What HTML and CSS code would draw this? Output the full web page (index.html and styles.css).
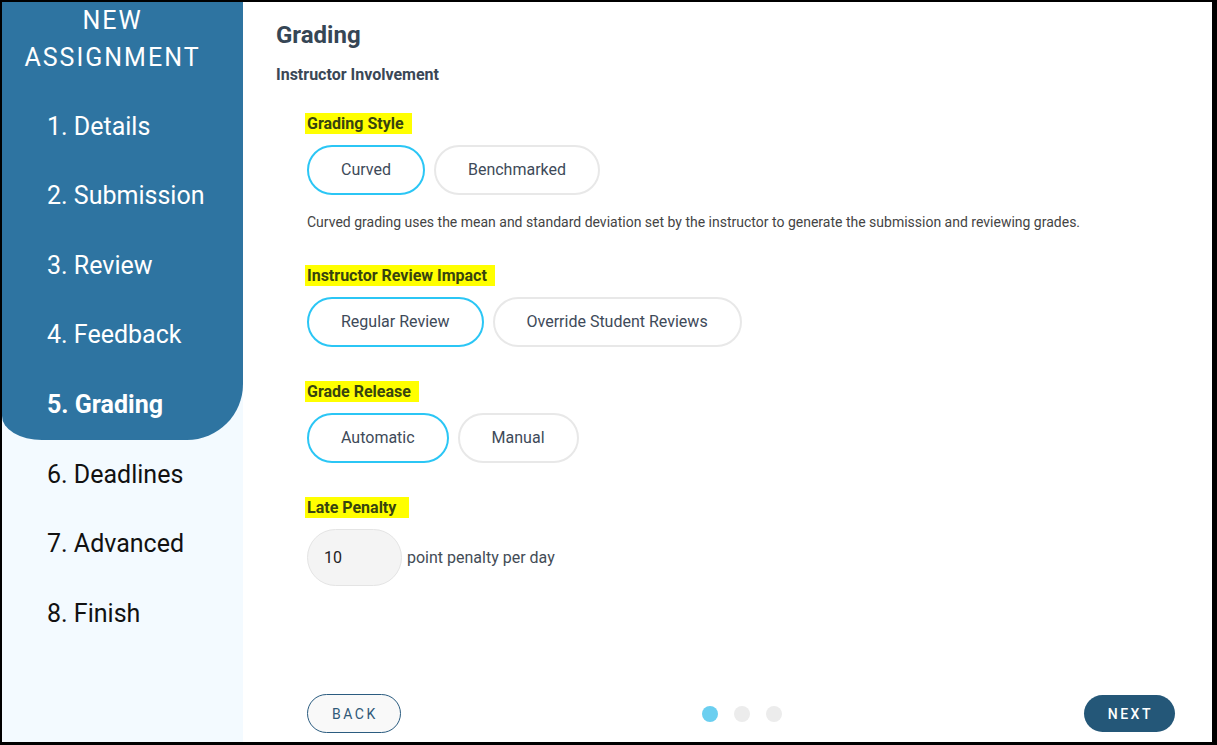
FILE: index.html
```html
<!DOCTYPE html>
<html lang="en">
<head>
  <meta charset="UTF-8">
  <title>New Assignment - Grading</title>
  <link rel="stylesheet" href="styles.css">
</head>
<body>
  <div class="frame">
    <aside class="sidebar">
      <div class="sidebar-top">
        <div class="sidebar-title">NEW<br>ASSIGNMENT</div>
        <ul class="steps">
          <li>1. Details</li>
          <li>2. Submission</li>
          <li>3. Review</li>
          <li>4. Feedback</li>
          <li class="current">5. Grading</li>
        </ul>
      </div>
      <ul class="steps steps-next">
        <li>6. Deadlines</li>
        <li>7. Advanced</li>
        <li>8. Finish</li>
      </ul>
    </aside>

    <main class="content">
      <h1>Grading</h1>
      <h2>Instructor Involvement</h2>

      <div class="fields">
        <div class="field">
          <div class="field-label"><span>Grading Style</span></div>
          <div class="options">
            <button class="option active">Curved</button>
            <button class="option">Benchmarked</button>
          </div>
          <p class="hint">Curved grading uses the mean and standard deviation set by the instructor to generate the submission and reviewing grades.</p>
        </div>

        <div class="field">
          <div class="field-label"><span>Instructor Review Impact</span></div>
          <div class="options">
            <button class="option active">Regular Review</button>
            <button class="option">Override Student Reviews</button>
          </div>
        </div>

        <div class="field">
          <div class="field-label"><span>Grade Release</span></div>
          <div class="options">
            <button class="option active">Automatic</button>
            <button class="option">Manual</button>
          </div>
        </div>

        <div class="field">
          <div class="field-label"><span class="wide">Late Penalty</span></div>
          <div class="penalty">
            <input class="penalty-input" type="text" value="10">
            <span>point penalty per day</span>
          </div>
        </div>
      </div>

      <div class="pager">
        <button class="btn-back">BACK</button>
        <div class="dots">
          <span class="dot active"></span>
          <span class="dot"></span>
          <span class="dot"></span>
        </div>
        <button class="btn-next">NEXT</button>
      </div>
    </main>
  </div>
</body>
</html>
```

FILE: styles.css
```css
body {
  margin: 0;
  font-family: Roboto, "Liberation Sans", sans-serif;
  background: white;
}

.frame {
  width: 1217px;
  height: 745px;
  box-sizing: border-box;
  border: 2px solid black;
  border-right-width: 5px;
  border-bottom-width: 3px;
  display: flex;
}

/* sidebar */
.sidebar {
  width: 241px;
  flex-shrink: 0;
  background: #f3faff;
}

.sidebar-top {
  background: #2e74a1;
  padding-bottom: 1px;
  border-radius: 0 0 56px 40px / 0 0 56px 24px;
}

.sidebar-title {
  color: white;
  font-size: 25px;
  line-height: 37px;
  letter-spacing: 2px;
  text-align: center;
  padding-right: 20px;
  margin-bottom: 16px;
}

.steps {
  list-style: none;
  margin: 0;
  padding: 0 0 0 45px;
}

.steps li {
  font-size: 25px;
  line-height: 69.4px;
  color: white;
}

.steps li.current {
  font-weight: bold;
}

.steps-next li {
  color: #111;
}

/* main */
.content {
  flex: 1;
  display: flex;
  flex-direction: column;
  padding: 19px 37px 9px 33px;
}

.content h1 {
  margin: 0;
  font-size: 24px;
  line-height: 28px;
  font-weight: bold;
  color: #364655;
}

.content h2 {
  margin: 17px 0 0;
  font-size: 16px;
  line-height: 18px;
  font-weight: bold;
  color: #3a4756;
}

.fields {
  margin-top: 29.5px;
  padding-left: 31px;
}

.field {
  margin-bottom: 35px;
}

.field-label {
  font-size: 16px;
  font-weight: bold;
  color: #38440f;
}

.field-label span {
  background: #ffff00;
  padding: 1px 8px 1px 2px;
  margin-left: -2px;
}

.field-label span.wide {
  padding-right: 13px;
}

.options {
  display: flex;
  gap: 9px;
  margin-top: 12px;
}

.option {
  height: 50px;
  padding: 0 32px;
  border: 2px solid #e8e8e8;
  border-radius: 25px;
  background: white;
  font-family: Roboto, sans-serif;
  font-size: 16px;
  color: #3e4a59;
  cursor: pointer;
}

.option.active {
  border-color: #2bc6f5;
}

.hint {
  margin: 19px 0 1px;
  font-size: 14px;
  line-height: 17px;
  color: #444;
}

.penalty {
  display: flex;
  align-items: center;
  gap: 5px;
  margin-top: 12px;
  font-size: 16px;
  color: #434c56;
}

.penalty-input {
  width: 95px;
  height: 57px;
  box-sizing: border-box;
  padding: 0 16px;
  border: 1px solid #e4e4e4;
  border-radius: 29px;
  background: #f4f4f4;
  font-family: Roboto, sans-serif;
  font-size: 16px;
  color: #222;
}

/* bottom nav */
.pager {
  margin-top: auto;
  padding-left: 31px;
  display: flex;
  justify-content: space-between;
  align-items: center;
}

.btn-back {
  height: 39px;
  padding: 0 22px 0 24px;
  border: 1.5px solid #2b5c80;
  border-radius: 20px;
  background: #f9f9f9;
  font-family: Roboto, sans-serif;
  font-size: 14px;
  letter-spacing: 2.5px;
  color: #2f5878;
  cursor: pointer;
}

.btn-next {
  height: 37px;
  padding: 0 22px 0 24px;
  border: none;
  border-radius: 19px;
  background: #245778;
  font-family: Roboto, sans-serif;
  font-size: 14px;
  font-weight: 500;
  letter-spacing: 2.5px;
  color: white;
  cursor: pointer;
}

.dots {
  display: flex;
  gap: 16px;
}

.dot {
  width: 16px;
  height: 16px;
  border-radius: 50%;
  background: #ececec;
}

.dot.active {
  background: #6bcff0;
}
```
